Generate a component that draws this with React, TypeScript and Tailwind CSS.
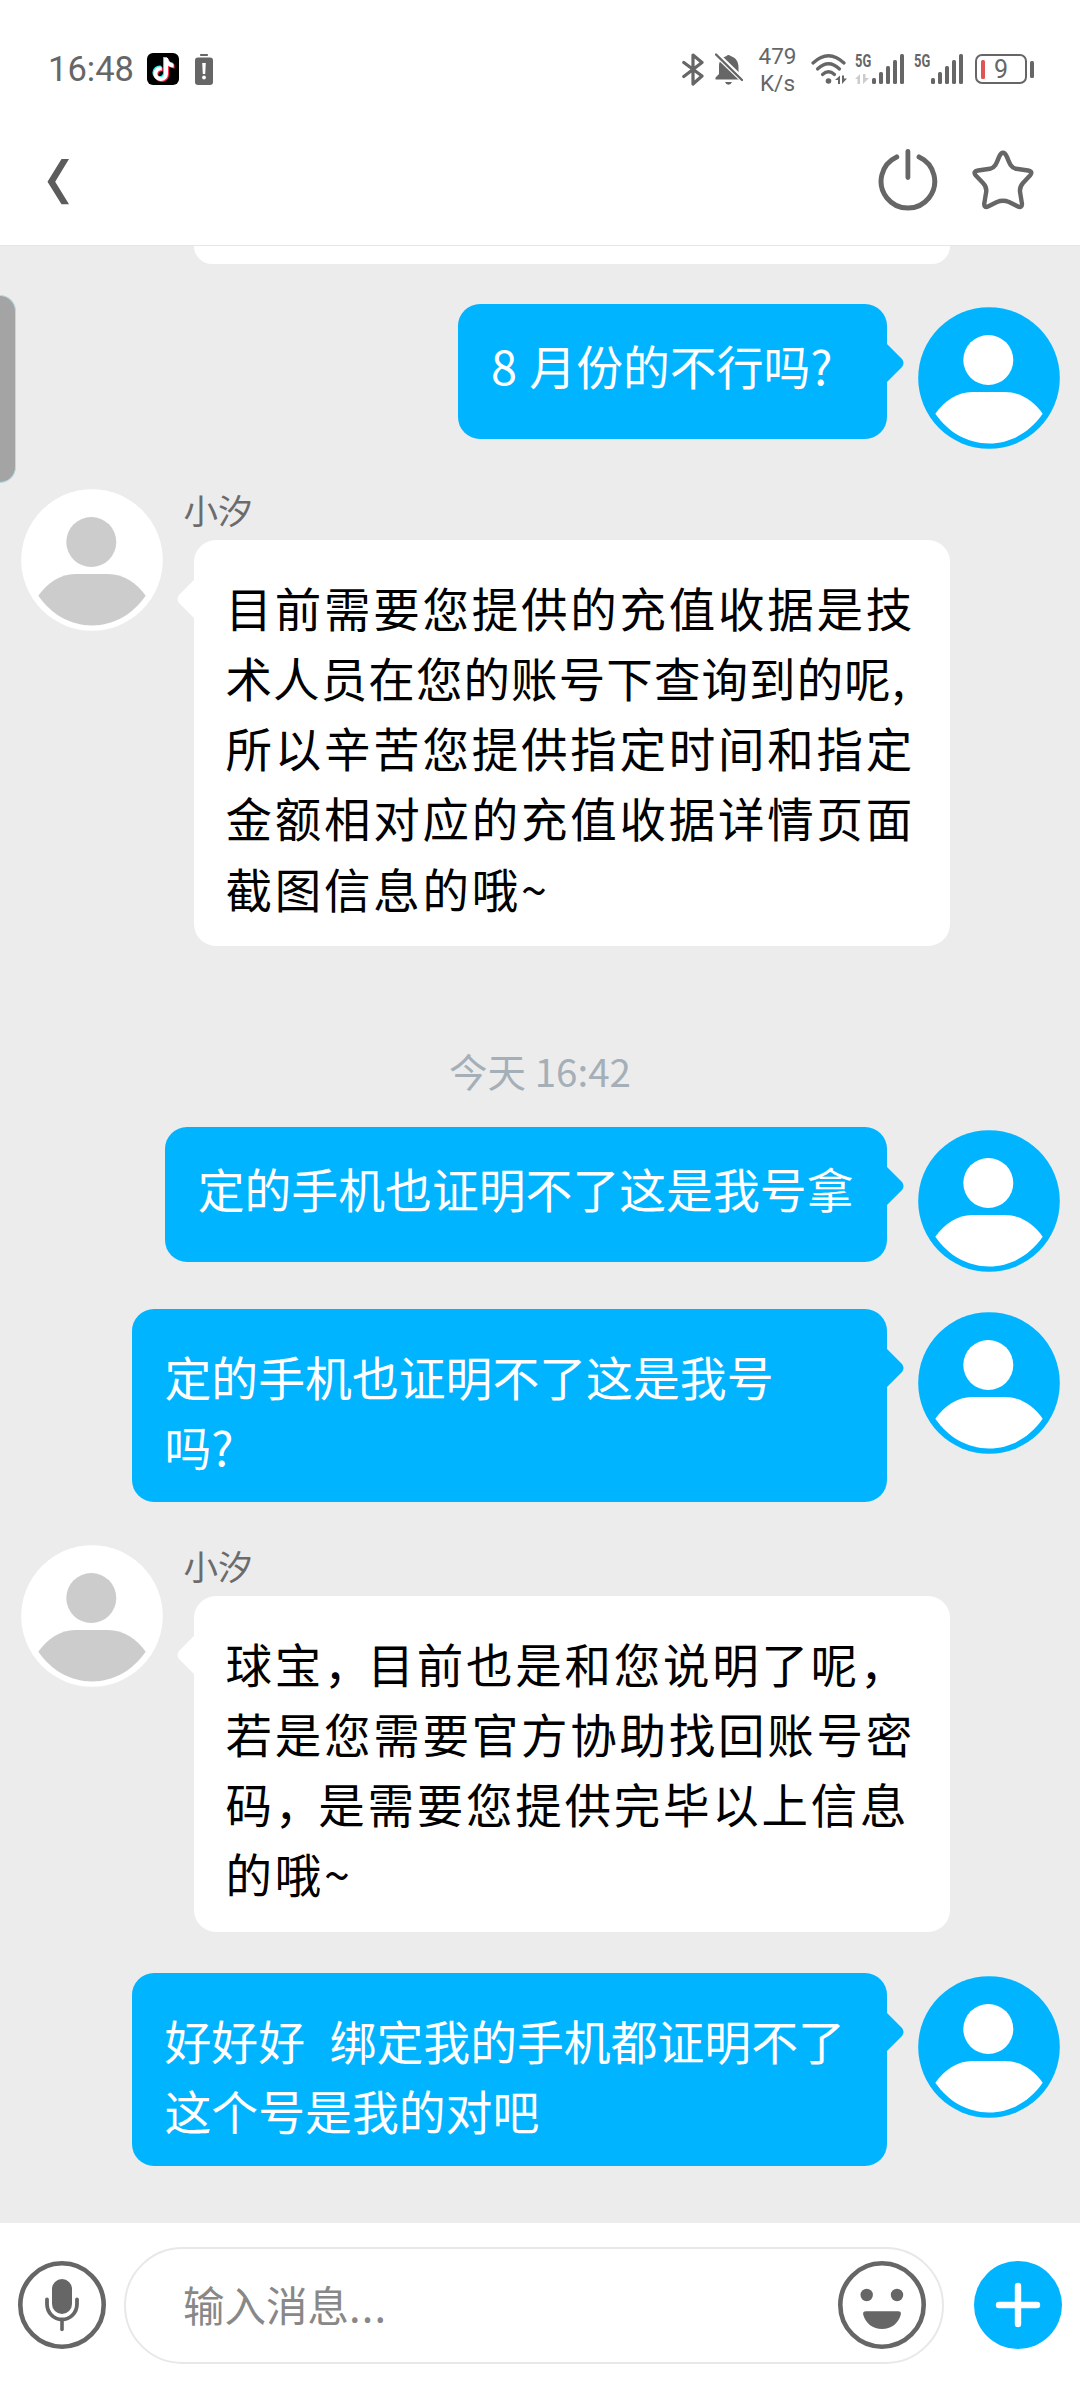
import React from 'react';
import { FaTiktok } from 'react-icons/fa6';

interface Line {
  text: string;
  // Letter spacing class, lines of the agent are justified one by one
  tracking?: string;
}

interface BubbleProps {
  lines: Line[];
  className?: string;
}

const Avatar: React.FC<{ mine?: boolean }> = ({ mine }) => (
  <svg
    viewBox="0 0 142 142"
    className={`size-[142px] shrink-0 ${mine ? 'text-white' : 'text-[#cccccc]'}`}
  >
    <circle cx="71" cy="71" r="70.8" fill={mine ? '#00b4ff' : '#ffffff'} />
    <circle cx="70.3" cy="53" r="25" fill="currentColor" />
    <path
      d="M17.3 106.8 C26 94 40 85 54 85 H87 C102 85 116 94 124.7 106.8 C112 125 93 136.5 71 136.5 C49 136.5 30 125 17.3 106.8Z"
      fill="currentColor"
    />
  </svg>
);

const AgentMessage: React.FC<BubbleProps> = ({ lines, className = '' }) => (
  <div className={`flex items-start pl-[20.5px] ${className}`}>
    <Avatar />
    <div className="ml-[21px]">
      <div className="-mt-[2px] h-[53.4px] text-[34.5px] leading-[45px] text-[#6b6b6b]">小汐</div>
      <div className="relative ml-[10px] w-[756px] rounded-[22px] bg-white px-[32px] pt-[26.5px] pb-[28.5px]">
        <svg viewBox="0 0 19 42" className="absolute top-[38px] -left-[17px] h-[42px] w-[19px]">
          <path d="M19 0 L2 17 Q-1 21 2 25 L19 42Z" fill="#fff" />
        </svg>
        {lines.map((line) => (
          <div
            key={line.text}
            className={`h-[70.2px] pt-[5px] text-[46.5px] leading-[70.2px] whitespace-pre text-black ${line.tracking ?? 'tracking-[2.75px]'}`}
          >
            {line.text.split(/(，)/).map((part, i) =>
              part === '，' ? (
                <span key={i} className="tracking-[-3px]">{part}</span>
              ) : (
                part
              )
            )}
          </div>
        ))}
      </div>
    </div>
  </div>
);

const MyMessage: React.FC<BubbleProps> = ({ lines, className = '' }) => {
  const single = lines.length === 1;

  return (
    <div className={`flex items-start justify-end pr-[20px] ${className}`}>
      <div
        className={`relative min-w-[428.5px] rounded-[22px] bg-[#00b4ff] px-[33px] ${
          single ? 'h-[135px] pt-[20.5px]' : 'h-[193px] w-[755px] pt-[26.5px]'
        }`}
      >
        <svg viewBox="0 0 19 42" className="absolute top-[38px] -right-[17px] h-[42px] w-[19px]">
          <path d="M0 0 L17 17 Q20 21 17 25 L0 42Z" fill="#00b4ff" />
        </svg>
        {lines.map((line) => (
          <div
            key={line.text}
            className="h-[70.2px] pt-[5px] text-[46.85px] leading-[70.2px] [word-spacing:1.8px] whitespace-pre text-white"
          >
            {line.text}
          </div>
        ))}
      </div>
      <div className="ml-[31.5px] pt-[2.5px]">
        <Avatar mine />
      </div>
    </div>
  );
};

const SignalBars = () => (
  <svg viewBox="0 0 32 30" className="h-[30px] w-[32px]" fill="#666">
    <rect x="0" y="24" width="4" height="6" rx="1.5" />
    <rect x="7" y="18" width="4" height="12" rx="1.5" />
    <rect x="14" y="12" width="4" height="18" rx="1.5" />
    <rect x="21" y="6" width="4" height="24" rx="1.5" />
    <rect x="28" y="0" width="4" height="30" rx="1.5" />
  </svg>
);

const NetworkTag: React.FC<{ idle?: boolean }> = ({ idle }) => (
  <div className="flex h-[30px] w-[17px] flex-col justify-between">
    <div className="h-[14px] w-[17px] origin-left scale-x-[0.68] font-['Roboto',sans-serif] text-[19px] leading-[14px] font-bold text-[#666]">
      5G
    </div>
    {idle && (
      <svg viewBox="0 0 14 10" className="h-[10px] w-[14px]" fill="#ccc">
        <path d="M0 5 L5 0 V10 H2.5 V5Z M8 0 H10.5 V4 H14 L8 10Z" />
      </svg>
    )}
  </div>
);

const StatusBar = () => (
  <div className="flex h-[138px] items-center pl-[48px] text-[#666]">
    <span className="w-[99px] font-['Roboto',sans-serif] text-[34.5px] leading-[40px]">16:48</span>
    <span className="relative flex size-[32px] items-center justify-center rounded-[6px] bg-black">
      <FaTiktok className="absolute top-[3.5px] left-[4px] size-[23px] text-[#25f4ee]" />
      <FaTiktok className="absolute top-[5.5px] left-[6px] size-[23px] text-[#fe2c55]" />
      <FaTiktok className="absolute top-[4.5px] left-[5px] size-[23px] text-white" />
    </span>
    <svg viewBox="0 0 18 31" className="ml-[16px] h-[31px] w-[18px]">
      <rect x="5" y="0" width="8" height="2" rx="0.8" fill="#666" />
      <rect x="0" y="3.5" width="18" height="27.5" rx="3" fill="#666" />
      <path d="M7.2 9 H10.8 L10.2 20 H7.8Z" fill="#fff" />
      <circle cx="9" cy="23.5" r="1.9" fill="#fff" />
    </svg>

    <svg viewBox="0 0 22 33" className="ml-[469px] h-[33px] w-[22px]" fill="none" stroke="#666" strokeWidth="3.2" strokeLinejoin="round" strokeLinecap="round">
      <path d="M1.8 9.5 L20 23 L11 31 V2 L20 9.5 L1.8 23.5" />
    </svg>
    <svg viewBox="0 0 28 32" className="ml-[11px] h-[32px] w-[28px]">
      <path d="M11.5 3 A2.5 2.5 0 0 1 15.5 3 C21 4.5 23.5 9 23.5 14 V20 L26 25 V26.5 H0.5 V24.5 L4 21 V13 C4 8 7 4.5 11.5 3Z" fill="#666" />
      <path d="M10 29 H17 Q16 31.8 13.5 31.8 Q11 31.8 10 29Z" fill="#666" />
      <path d="M0 0 L29 28" stroke="#fff" strokeWidth="5.6" />
      <path d="M1 1.5 L27 27" stroke="#666" strokeWidth="2.4" strokeLinecap="round" />
    </svg>
    <div className="ml-[14px] w-[41px] pt-[2px] text-center font-['Roboto',sans-serif] text-[22.5px] leading-[27px]">
      <div>479</div>
      <div>K/s</div>
    </div>
    <svg viewBox="0 0 36 31" className="ml-[13px] h-[31px] w-[36px]" fill="none" stroke="#666" strokeWidth="3.2" strokeLinecap="round">
      <path d="M2 9 Q17.5 -5.5 33 9" />
      <path d="M6.5 15 Q17.5 4.5 28.5 15" />
      <path d="M11.5 20.5 Q17.5 15 23.5 20.5" />
      <circle cx="17.5" cy="27" r="2.8" fill="#666" stroke="none" />
      <path d="M24 26 L29 21.5 V30 H27 V26Z M31 21.5 H33 V24.5 H36 L31 30Z" fill="#666" stroke="none" />
    </svg>
    <div className="ml-[8px] flex">
      <NetworkTag idle />
      <SignalBars />
    </div>
    <div className="ml-[10px] flex">
      <NetworkTag />
      <SignalBars />
    </div>
    <div className="ml-[12px] flex items-center">
      <div className="relative flex h-[30px] w-[52px] items-center justify-center rounded-[7px] border-[2.5px] border-[#666]">
        <span className="absolute top-[4px] left-[3.5px] h-[19px] w-[4.5px] rounded-[1.5px] bg-[#df5555]" />
        <span className="font-['Roboto',sans-serif] text-[25px] leading-[25px]">9</span>
      </div>
      <div className="ml-[2.5px] h-[17px] w-[4px] rounded-[1.5px] bg-[#666]" />
    </div>
  </div>
);

const NavBar = () => (
  <div className="flex h-[107px] items-start justify-between pr-[44px] pl-[47px]">
    <svg viewBox="0 0 22 46" className="mt-[21px] h-[46px] w-[22px]" fill="#5c5c5c">
      <path d="M14.5 0 H22 L8.2 22.8 L22 45.2 H14.5 L0.5 22.8Z" />
    </svg>
    <div className="flex pt-[10px]">
      <svg viewBox="0 0 60 64" className="h-[64px] w-[60px]" fill="none" stroke="#666" strokeWidth="5" strokeLinecap="round">
        <path d="M18.7 8.9 A26.8 26.8 0 1 0 41.1 8.9" />
        <path d="M29.9 3.5 V29.5" strokeWidth="4.8" />
      </svg>
      <svg viewBox="0 0 66 64" className="ml-[32px] h-[64px] w-[66px]" fill="none" stroke="#666" strokeWidth="4.4" strokeLinejoin="round">
        <path d="M33 4.8 Q35 4.8 37 9 C39.5 15.5 41 19.5 46 20.8 L58 22.5 Q63.5 23.5 60 27.5 L53 35 Q49 39.5 50.2 45 L52 56 Q52 60.5 47.5 58.2 L39 54 Q33 51.5 27 54 L18.5 58.2 Q14 60.5 14.2 56 L16 45 Q17.3 39.5 13 35 L5.8 27.5 Q2.5 23.5 8 22.5 L20 20.8 C25 19.5 26.5 15.5 29 9 Q31 4.8 33 4.8Z" />
      </svg>
    </div>
  </div>
);

const InputBar = () => (
  <div className="flex h-[164px] items-center bg-white pl-[18px]">
    <svg viewBox="0 0 88 88" className="size-[88px]" fill="none" stroke="#666" strokeLinecap="round">
      <circle cx="44" cy="44" r="41.7" strokeWidth="4.6" />
      <rect x="34" y="18" width="20" height="35" rx="10" fill="#666" stroke="none" />
      <path d="M29 38.5 V43 A15 15.5 0 0 0 59 43 V38.5" strokeWidth="3.8" />
      <path d="M44 59 V68.5" strokeWidth="3.6" />
    </svg>
    <div className="ml-[18px] flex h-[117px] w-[820px] items-center justify-between rounded-full border-2 border-[#e8e8e8] pr-[16px] pl-[57px]">
      <span className="pb-[3px] text-[41.5px] leading-[50px] text-[#888]">
        输入消息<span className="tracking-[1.2px]">...</span>
      </span>
      <svg viewBox="0 0 88 88" className="size-[88px]" fill="#666">
        <circle cx="44" cy="44" r="41.7" strokeWidth="4.6" stroke="#666" fill="none" />
        <circle cx="28.7" cy="34" r="6.2" />
        <circle cx="59" cy="34" r="6.2" />
        <path d="M28 50.2 H60 Q63.5 50.2 62.8 53.5 C60.5 62.5 53 68 44 68 C35 68 27.5 62.5 25.2 53.5 Q24.5 50.2 28 50.2Z" />
      </svg>
    </div>
    <svg viewBox="0 0 88 88" className="ml-[30px] size-[88px]">
      <circle cx="44" cy="44" r="44" fill="#00b4ff" />
      <path d="M44 25 V63 M25 44 H63" stroke="#fff" strokeWidth="6.4" strokeLinecap="round" />
    </svg>
  </div>
);

export default function App() {
  return (
    <div className="relative flex h-[2387px] w-[1080px] flex-col overflow-hidden bg-[#ececec] font-['Noto_Sans_CJK_SC',sans-serif]">
      <header className="h-[246px] border-b border-[#e6e6e6] bg-white">
        <StatusBar />
        <NavBar />
      </header>

      <main className="flex-1">
        <div className="ml-[194px] h-[18px] w-[756px] rounded-b-[20px] bg-white" />

        <MyMessage className="mt-[40px] h-[145px]" lines={[{ text: '8 月份的不行吗?' }]} />

        <AgentMessage
          className="mt-[40px] h-[458px]"
          lines={[
            { text: '目前需要您提供的充值收据是技' },
            { text: '术人员在您的账号下查询到的呢,', tracking: 'tracking-[1.1px]' },
            { text: '所以辛苦您提供指定时间和指定' },
            { text: '金额相对应的充值收据详情页面' },
            { text: '截图信息的哦~' }
          ]}
        />

        <div className="mt-[98px] h-[50px] text-center text-[38.5px] leading-[50px] text-[#a5afb7]">今天 16:42</div>

        <MyMessage className="mt-[32px] h-[144px]" lines={[{ text: '定的手机也证明不了这是我号拿' }]} />
        <MyMessage
          className="mt-[38px] h-[193px]"
          lines={[{ text: '定的手机也证明不了这是我号' }, { text: '吗?' }]}
        />

        <AgentMessage
          className="mt-[43px] h-[387px]"
          lines={[
            { text: '球宝，目前也是和您说明了呢，' },
            { text: '若是您需要官方协助找回账号密' },
            { text: '码，是需要您提供完毕以上信息' },
            { text: '的哦~' }
          ]}
        />

        <MyMessage
          className="mt-[41px] h-[193px]"
          lines={[{ text: '好好好  绑定我的手机都证明不了' }, { text: '这个号是我的对吧' }]}
        />
      </main>

      <InputBar />

      {/* Edge panel handle */}
      <div className="absolute top-[295px] left-0 h-[188px] w-[16px] rounded-r-[16px] border-y border-r border-[#b5dce2] bg-[#a4a4a4]" />
    </div>
  );
}
